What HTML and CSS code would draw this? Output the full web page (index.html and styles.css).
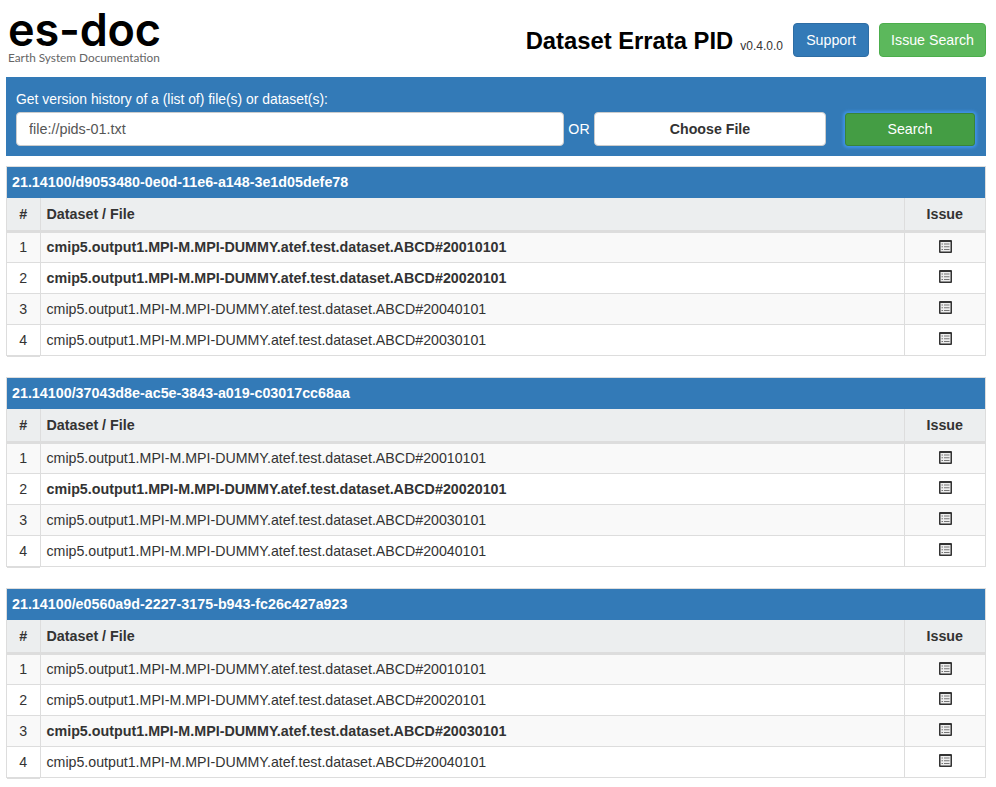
FILE: index.html
```html
<!DOCTYPE html>
<html lang="en">
  <head>
    <meta charset="UTF-8" />
    <title>Dataset Errata PID</title>
    <link rel="stylesheet" href="styles.css">
  </head>
  <body>
    <svg class="icon-defs" width="0" height="0">
      <symbol id="list-alt" viewBox="0 0 13 13">
        <path d="M1 0h11a1 1 0 0 1 1 1v11a1 1 0 0 1-1 1H1a1 1 0 0 1-1-1V1a1 1 0 0 1 1-1z" fill="#333"/>
        <path d="M1.500 2h10v9.500h-10z" fill="#eee"/>
        <path d="M2.500 3.500h1.500v1H2.500zM5 3.500h5.500v1H5zM2.500 6.200h1.500v1H2.500zM5 6.200h5.500v1H5zM2.500 8.900h1.500v1H2.500zM5 8.900h5.500v1H5z" fill="#777"/>
      </symbol>
    </svg>

    <header class="top-bar">
      <div class="logo">
        <div class="logo-name">es-doc</div>
        <div class="logo-sub">Earth System Documentation</div>
      </div>
      <div class="top-right">
        <h1>Dataset Errata PID</h1>
        <span class="version">v0.4.0.0</span>
        <a class="btn btn-blue" href="#">Support</a>
        <a class="btn btn-green" href="#">Issue Search</a>
      </div>
    </header>

    <section class="search-box">
      <label for="pidInput">Get version history of a (list of) file(s) or dataset(s):</label>
      <div class="search-row">
        <input type="text" id="pidInput" value="file://pids-01.txt" />
        <span class="or">OR</span>
        <button class="choose-file" type="button">Choose File</button>
        <button class="search-btn" type="button">Search</button>
      </div>
    </section>

    <section class="panel">
      <div class="panel-heading">21.14100/d9053480-0e0d-11e6-a148-3e1d05defe78</div>
      <table>
        <thead>
          <tr><th class="num">#</th><th class="name">Dataset / File</th><th class="issue">Issue</th></tr>
        </thead>
        <tbody>
          <tr><td class="num">1</td><td class="name"><b>cmip5.output1.MPI-M.MPI-DUMMY.atef.test.dataset.ABCD#20010101</b></td><td class="issue"><svg class="icon"><use href="#list-alt"/></svg></td></tr>
          <tr><td class="num">2</td><td class="name"><b>cmip5.output1.MPI-M.MPI-DUMMY.atef.test.dataset.ABCD#20020101</b></td><td class="issue"><svg class="icon"><use href="#list-alt"/></svg></td></tr>
          <tr><td class="num">3</td><td class="name">cmip5.output1.MPI-M.MPI-DUMMY.atef.test.dataset.ABCD#20040101</td><td class="issue"><svg class="icon"><use href="#list-alt"/></svg></td></tr>
          <tr><td class="num">4</td><td class="name">cmip5.output1.MPI-M.MPI-DUMMY.atef.test.dataset.ABCD#20030101</td><td class="issue"><svg class="icon"><use href="#list-alt"/></svg></td></tr>
        </tbody>
      </table>
    </section>

    <section class="panel">
      <div class="panel-heading">21.14100/37043d8e-ac5e-3843-a019-c03017cc68aa</div>
      <table>
        <thead>
          <tr><th class="num">#</th><th class="name">Dataset / File</th><th class="issue">Issue</th></tr>
        </thead>
        <tbody>
          <tr><td class="num">1</td><td class="name">cmip5.output1.MPI-M.MPI-DUMMY.atef.test.dataset.ABCD#20010101</td><td class="issue"><svg class="icon"><use href="#list-alt"/></svg></td></tr>
          <tr><td class="num">2</td><td class="name"><b>cmip5.output1.MPI-M.MPI-DUMMY.atef.test.dataset.ABCD#20020101</b></td><td class="issue"><svg class="icon"><use href="#list-alt"/></svg></td></tr>
          <tr><td class="num">3</td><td class="name">cmip5.output1.MPI-M.MPI-DUMMY.atef.test.dataset.ABCD#20030101</td><td class="issue"><svg class="icon"><use href="#list-alt"/></svg></td></tr>
          <tr><td class="num">4</td><td class="name">cmip5.output1.MPI-M.MPI-DUMMY.atef.test.dataset.ABCD#20040101</td><td class="issue"><svg class="icon"><use href="#list-alt"/></svg></td></tr>
        </tbody>
      </table>
    </section>

    <section class="panel">
      <div class="panel-heading">21.14100/e0560a9d-2227-3175-b943-fc26c427a923</div>
      <table>
        <thead>
          <tr><th class="num">#</th><th class="name">Dataset / File</th><th class="issue">Issue</th></tr>
        </thead>
        <tbody>
          <tr><td class="num">1</td><td class="name">cmip5.output1.MPI-M.MPI-DUMMY.atef.test.dataset.ABCD#20010101</td><td class="issue"><svg class="icon"><use href="#list-alt"/></svg></td></tr>
          <tr><td class="num">2</td><td class="name">cmip5.output1.MPI-M.MPI-DUMMY.atef.test.dataset.ABCD#20020101</td><td class="issue"><svg class="icon"><use href="#list-alt"/></svg></td></tr>
          <tr><td class="num">3</td><td class="name"><b>cmip5.output1.MPI-M.MPI-DUMMY.atef.test.dataset.ABCD#20030101</b></td><td class="issue"><svg class="icon"><use href="#list-alt"/></svg></td></tr>
          <tr><td class="num">4</td><td class="name">cmip5.output1.MPI-M.MPI-DUMMY.atef.test.dataset.ABCD#20040101</td><td class="issue"><svg class="icon"><use href="#list-alt"/></svg></td></tr>
        </tbody>
      </table>
    </section>
  </body>
</html>
```

FILE: styles.css
```css
* {
  box-sizing: border-box;
}

body {
  font-family: "Liberation Sans", Arial, sans-serif;
  font-size: 14.2px;
  color: #333;
  background-color: #fff;
  margin: 0;
  padding: 0 10px 0 6px;
}

b,
th,
.panel-heading {
  font-size: 14.3px;
  font-weight: 700;
}

.icon-defs {
  position: absolute;
}

.top-bar {
  display: flex;
  justify-content: space-between;
  height: 77px;
}

.logo {
  padding: 8px 0 0 2px;
}

.logo-name {
  font-family: Inter, sans-serif;
  font-size: 45px;
  font-weight: 600;
  line-height: 44px;
  letter-spacing: -0.2px;
  color: #000;
}

.logo-sub {
  font-family: Lato, sans-serif;
  font-size: 11.8px;
  line-height: 12px;
  color: #666;
}

.top-right {
  display: flex;
  align-items: flex-start;
  padding-top: 23px;
}

h1 {
  font-size: 23.8px;
  font-weight: 700;
  line-height: 35px;
  margin: 0;
  color: #000;
}

.version {
  font-size: 12px;
  line-height: 16px;
  margin: 15px 10px 0 7px;
}

.btn {
  display: block;
  height: 34px;
  line-height: 32px;
  text-align: center;
  border: 1px solid;
  border-radius: 4px;
  color: #fff;
  text-decoration: none;
}

.btn-blue {
  width: 76px;
  background-color: #337ab7;
  border-color: #2e6da4;
  margin-right: 10px;
}

.btn-green {
  width: 107px;
  background-color: #5cb85c;
  border-color: #4cae4c;
}

.search-box {
  background-color: #337ab7;
  padding: 12px 10px 10px;
  height: 79px;
  color: #fff;
}

.search-box label {
  display: block;
  font-size: 13.9px;
  line-height: 20px;
  margin-bottom: 3px;
}

.search-row {
  display: flex;
  align-items: center;
}

.search-row input {
  width: 548px;
  height: 34px;
  padding: 6px 12px;
  font: inherit;
  font-size: 14.4px;
  color: #555;
  border: 1px solid #ccc;
  border-radius: 4px;
}

.or {
  width: 30px;
  text-align: center;
}

.choose-file {
  width: 232px;
  height: 34px;
  font: inherit;
  font-weight: 700;
  color: #333;
  background-color: #fff;
  border: 1px solid #ccc;
  border-radius: 4px;
}

.search-btn {
  width: 130px;
  height: 33px;
  margin-left: 19px;
  font: inherit;
  color: #fff;
  background-color: #449d44;
  border: 1px solid #398439;
  border-radius: 3px;
  box-shadow: 0 0 3px 2px #3f93e6;
}

.panel {
  margin-top: 10px;
  margin-bottom: 21px;
  border: 1px solid #ddd;
}

.panel-heading {
  background-color: #337ab7;
  color: #fff;
  height: 31px;
  line-height: 30px;
  padding-left: 5px;
}

table {
  width: 100%;
  border-collapse: collapse;
  table-layout: fixed;
}

th,
td {
  height: 31px;
  padding: 0 5px 0 6px;
  border: 1px solid #ddd;
  text-align: left;
}

tr > :first-child {
  border-left: 0;
}

tr > :last-child {
  border-right: 0;
}

tbody tr:last-child td {
  border-bottom: 0;
}

tbody tr:last-child .num {
  box-shadow: 0 2px 0 #ddd;
}

th {
  height: 33px;
  background-color: #eceeef;
  border-top: 0;
  border-bottom: 3px solid #ddd;
}

tbody tr:nth-child(odd) {
  background-color: #f9f9f9;
}

th.num,
td.num {
  width: 33px;
  padding: 0;
  text-align: center;
}

th.issue {
  width: 81px;
  padding: 0;
  text-align: center;
}

td.issue {
  padding: 0 0 2px 2px;
}

.icon {
  display: block;
  width: 13px;
  height: 13px;
  margin: 0 auto;
}
```
